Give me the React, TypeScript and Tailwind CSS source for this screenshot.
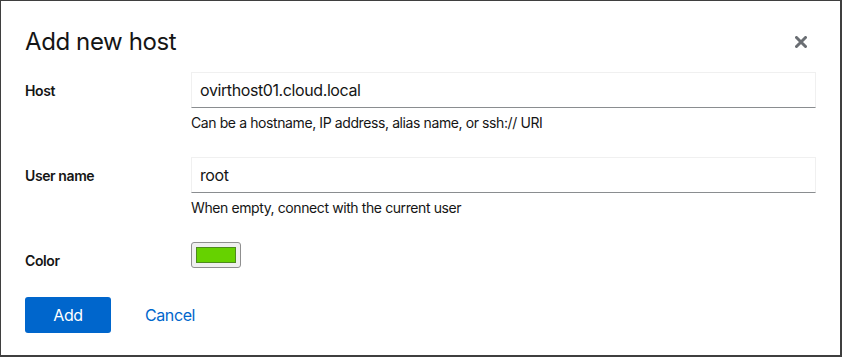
import React from 'react';

const Field: React.FC<{ label: string; children: React.ReactNode }> = ({ label, children }) => (
  <div className="flex">
    <div className="w-[166px] shrink-0 h-9 flex items-center text-[14px] font-semibold text-[#151515]">{label}</div>
    <div className="flex-1">{children}</div>
  </div>
);

export default function App() {
  return (
    <div className="w-[842px] h-[357px] bg-white border-l border-t border-r-2 border-b-2 border-[#3f3f3f] font-['Inter',sans-serif] tracking-[-0.025em] text-[#151515] relative">
      <button className="absolute right-[31px] top-[33px] w-4 h-4 flex items-center justify-center text-[#6a6e73]">
        <svg viewBox="0 0 12 12" className="w-[12px] h-[12px]">
          <path d="M1.5 1.5 L10.5 10.5 M10.5 1.5 L1.5 10.5" stroke="currentColor" strokeWidth="3" strokeLinecap="round" />
        </svg>
      </button>

      <div className="pl-6 pr-6 pt-[25px]">
        <h1 className="text-[24px] leading-[31px] font-normal">Add new host</h1>

        <div className="mt-[15px] flex flex-col gap-6">
          <Field label="Host">
            <div className="h-9 border border-[#f0f0f0] border-b-[#8a8d90] flex items-center px-2 text-[16px]">ovirthost01.cloud.local</div>
            <p className="mt-[5px] text-[14px] leading-[20px]">Can be a hostname, IP address, alias name, or ssh:// URI</p>
          </Field>

          <Field label="User name">
            <div className="h-9 border border-[#f0f0f0] border-b-[#8a8d90] flex items-center px-2 text-[16px]">root</div>
            <p className="mt-[5px] text-[14px] leading-[20px]">When empty, connect with the current user</p>
          </Field>

          <Field label="Color">
            <div className="w-[50px] h-[26px] rounded-[3px] border border-[#8f8f8f] bg-[#efefef] flex items-center justify-center">
              <div className="w-[40px] h-[16px] bg-[#66d200] border border-[#4d8a1d]" />
            </div>
          </Field>
        </div>

        <div className="mt-[19px] flex items-center gap-[34px]">
          <button className="w-[86px] h-9 rounded-[3px] bg-[#0066cc] text-white text-[16px]">Add</button>
          <button className="text-[16px] text-[#0066cc]">Cancel</button>
        </div>
      </div>
    </div>
  );
}
